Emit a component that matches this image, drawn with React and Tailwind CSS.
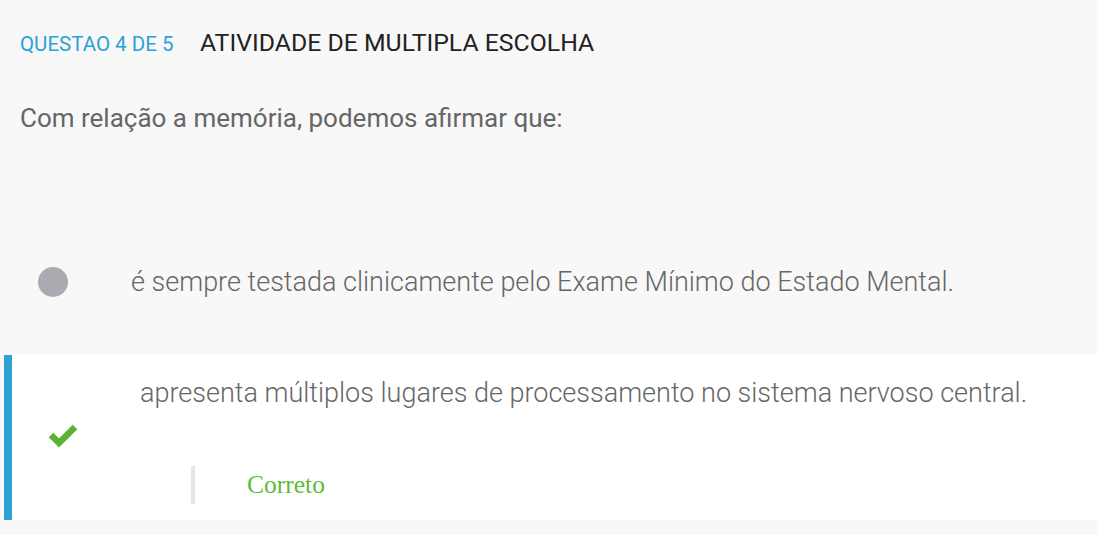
import React from 'react';

const font = { fontFamily: 'Roboto, "Liberation Sans", sans-serif' };

const CheckIcon = () => (
  <svg width="30" height="24" viewBox="0 0 30 24">
    <path d="M3 11 L11 19 L27 3" fill="none" stroke="#5db330" strokeWidth="6.5" strokeLinejoin="miter" />
  </svg>
);

const App = () => {
  return (
    <div className="min-h-screen bg-[#f8f8f8] text-[#666]" style={font}>
      <header className="flex items-baseline px-5 pt-[31px]">
        <span className="text-[20.5px] text-[#2ba2d6] w-[180px] leading-6">QUESTAO 4 DE 5</span>
        <h1 className="text-[24.8px] text-[#222] leading-6">ATIVIDADE DE MULTIPLA ESCOLHA</h1>
      </header>

      <p className="px-5 mt-[48px] text-[26px] leading-7 text-[#666]">Com relação a memória, podemos afirmar que:</p>

      <div className="flex items-center mt-[130px] h-[40px]">
        <div className="ml-[38px] w-[30px] h-[30px] rounded-full bg-[#a9abb0]"></div>
        <span className="ml-[63px] text-[27px] font-light text-[#666]">
          é sempre testada clinicamente pelo Exame Mínimo do Estado Mental.
        </span>
      </div>

      <div className="mt-[53px] ml-[4px] bg-white border-l-8 border-[#2ea3d1] h-[165px] flex">
        <div className="w-[128px] flex flex-col justify-center pb-[4px]">
          <div className="ml-[36px]"><CheckIcon /></div>
        </div>
        <div className="flex flex-col pt-[22px]">
          <span className="text-[27px] font-light text-[#666] leading-8">
            apresenta múltiplos lugares de processamento no sistema nervoso central.
          </span>
          <div className="mt-[57px] ml-[51px] border-l-4 border-[#e6e6ea] h-[38px] flex items-center">
            <span className="ml-[52px] text-[25.5px] text-[#5cbb3a]" style={{ fontFamily: '"Liberation Serif", serif' }}>Correto</span>
          </div>
        </div>
      </div>
    </div>
  );
};

export default App;
